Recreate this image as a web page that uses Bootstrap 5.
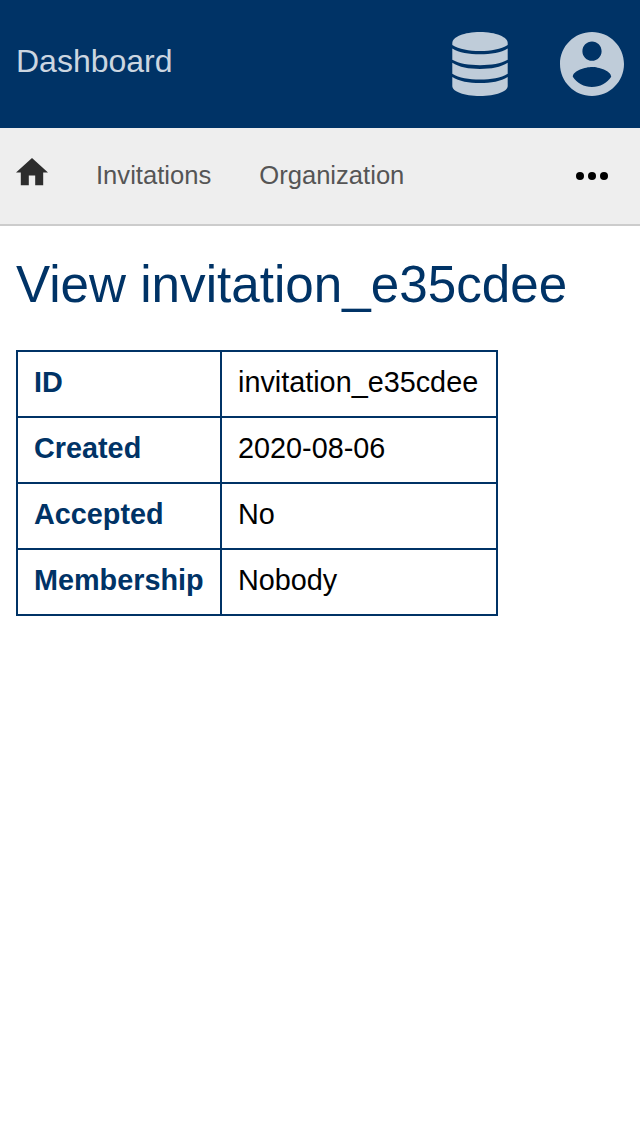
<!DOCTYPE html>
<html lang="en">
<head>
<meta charset="utf-8">
<meta name="viewport" content="width=device-width, initial-scale=1">
<title>View invitation_e35cdee</title>
<link href="https://cdn.jsdelivr.net/npm/bootstrap@5.3.0/dist/css/bootstrap.min.css" rel="stylesheet">
<style>
  :root { --navy: #003366; }
  body { font-family: "Liberation Sans", Arial, sans-serif; color: #000; background: #fff; line-height: 1.2; }
  .topbar { background: var(--navy); height: 128px; padding: 0 16px; }
  .topbar a { color: #bfccd9; }
  .topbar .brand { font-size: 32px; line-height: 36px; color: #ccd6e0; padding-bottom: 6px; }
  .topbar .tools { gap: 52px; }
  .subnav { background: #eee; height: 98px; border-bottom: 2px solid #ccc; padding: 0 16px; font-size: 25.6px; }
  .subnav .nav-link { color: #555; padding: 0 0 2px; line-height: 32px; }
  .subnav .links { gap: 48px; }
  .subnav .home { color: #2d2d2d; padding-bottom: 8px; }
  .subnav .more { color: #000; padding-right: 8px; }
  main { padding: 29px 16px; }
  h1 { font-size: 51.2px; color: var(--navy); line-height: 59px; margin-bottom: 36px; font-weight: 400; }
  .details { font-size: 28.8px; line-height: 32px; border-collapse: collapse; width: 482px; table-layout: fixed; }
  .details th, .details td { border: 2px solid var(--navy); height: 66px; padding: 14px 16px 18px; vertical-align: top; }
  .details th { color: var(--navy); width: 204px; }
</style>
</head>
<body>
<header class="topbar d-flex align-items-center justify-content-between">
  <a class="brand text-decoration-none" href="#">Dashboard</a>
  <div class="tools d-flex align-items-center">
    <a class="d-flex" href="#" aria-label="Data">
      <svg width="56" height="64" viewBox="0 0 56 64" fill="currentColor">
        <path d="M28 0C12 0 .3 5 .3 11v2C7 17.300 17 19 28 19s21-1.700 27.700-6v-2C55.700 5 44 0 28 0z"/>
        <path d="M.3 16.500C7 20.700 17 22.300 28 22.300s21-1.600 27.700-5.800v11.300C49 31.700 39 33.200 28 33.200S7 31.700.3 27.800z"/>
        <path d="M.3 30.800C7 35.200 17 37 28 37s21-1.800 27.700-6.200v11C49 46 39 47.600 28 47.600S7 46 .3 41.800z"/>
        <path d="M.3 45C7 49.400 17 51 28 51s21-1.600 27.700-6v9C55.700 59.500 44 64 28 64S.3 59.500.3 54z"/>
      </svg>
    </a>
    <a class="d-flex" href="#" aria-label="Account">
      <svg width="64" height="64" viewBox="2 2 20 20" fill="currentColor"><path d="M12 2C6.480 2 2 6.480 2 12s4.480 10 10 10 10-4.480 10-10S17.520 2 12 2zm0 3c1.660 0 3 1.340 3 3s-1.340 3-3 3-3-1.340-3-3 1.340-3 3-3zm0 14.200c-2.500 0-4.710-1.280-6-3.220.03-1.990 4-3.080 6-3.080 1.990 0 5.970 1.090 6 3.080-1.290 1.940-3.500 3.220-6 3.220z"/></svg>
    </a>
  </div>
</header>
<nav class="subnav d-flex align-items-center justify-content-between">
  <div class="links d-flex align-items-center">
    <a class="home d-flex" href="#" aria-label="Home">
      <svg width="32" height="27.2" viewBox="2 3 20 17" fill="currentColor"><path d="M10 20v-6h4v6h5v-8h3L12 3 2 12h3v8z"/></svg>
    </a>
    <a class="nav-link" href="#">Invitations</a>
    <a class="nav-link" href="#">Organization</a>
  </div>
  <a class="more d-flex" href="#" aria-label="More">
    <svg width="48" height="48" viewBox="0 0 24 24" fill="currentColor"><circle cx="6" cy="12" r="2"/><circle cx="12" cy="12" r="2"/><circle cx="18" cy="12" r="2"/></svg>
  </a>
</nav>
<main>
  <h1>View invitation_e35cdee</h1>
  <table class="details">
    <tbody>
      <tr><th scope="row">ID</th><td>invitation_e35cdee</td></tr>
      <tr><th scope="row">Created</th><td>2020-08-06</td></tr>
      <tr><th scope="row">Accepted</th><td>No</td></tr>
      <tr><th scope="row">Membership</th><td>Nobody</td></tr>
    </tbody>
  </table>
</main>
<script src="https://cdn.jsdelivr.net/npm/bootstrap@5.3.0/dist/js/bootstrap.bundle.min.js"></script>
</body>
</html>
